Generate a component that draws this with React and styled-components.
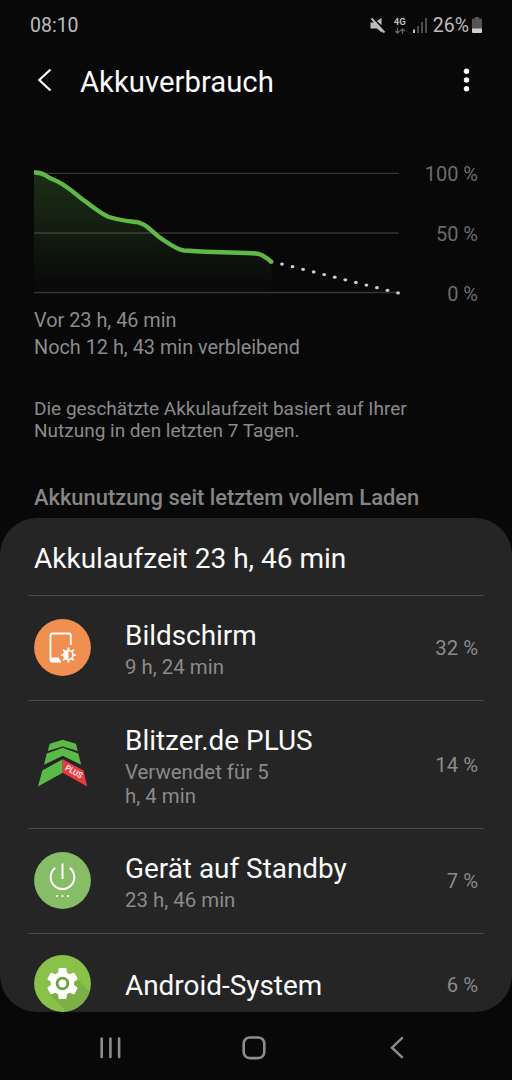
import styled, { createGlobalStyle } from 'styled-components';

const GlobalStyle = createGlobalStyle`
    body {
        margin: 0;
        background: #080808;
        font-family: Roboto, "Noto Sans", sans-serif;
        color: #fafafa;
    }
    svg {
        display: block;
        flex: none;
    }
`;

const Screen = styled.div`
    width: 512px;
    height: 1080px;
    overflow: hidden;
    display: flex;
    flex-direction: column;
`;

const StatusBar = styled.div`
    height: 50px;
    padding: 0 30px;
    box-sizing: border-box;
    display: flex;
    align-items: center;
    justify-content: space-between;
    font-size: 19.5px;
    line-height: 24px;
    color: #bdbdbd;
`;

const StatusIcons = styled.div`
    display: flex;
    align-items: center;
`;

const StatusText = styled.span`
    padding-top: 1px;
`;

const Percent = styled(StatusText)`
    margin: 0 3px 0 6px;
`;

const Network = styled.div`
    width: 14px;
    height: 19px;
    margin: 0 6px 0 7px;
    display: flex;
    flex-direction: column;
    align-items: center;
`;

const NetworkLabel = styled.span`
    font-size: 9.5px;
    line-height: 11px;
    font-weight: 700;
`;

const Header = styled.header`
    height: 60px;
    padding: 0 42px 0 37px;
    display: flex;
    align-items: center;
`;

const Title = styled.h1`
    flex: 1;
    margin: 4px 0 0 28px;
    font-size: 29.3px;
    line-height: 36px;
    font-weight: 400;
`;

const Chart = styled.section`
    height: 140px;
    margin-top: 54px;
    padding: 0 34px;
    display: flex;
    justify-content: space-between;
`;

const Scale = styled.div`
    display: flex;
    flex-direction: column;
    text-align: right;
    font-size: 20px;
    line-height: 20px;
    gap: 40px;
    color: #6b6b6b;
`;

const Times = styled.div`
    margin-top: 3px;
    padding: 0 34px;
    font-size: 19.85px;
    line-height: 27px;
    color: #8b8b8b;
`;

const Hint = styled.p`
    margin: 37px 34px 0;
    font-size: 19px;
    line-height: 22px;
    color: #8b8b8b;
`;

const SectionTitle = styled.h2`
    margin: 42px 34px 0;
    font-size: 21.9px;
    line-height: 28px;
    height: 34px;
    font-weight: 500;
    color: #858585;
`;

const Card = styled.main`
    height: 494px;
    border-radius: 37px;
    overflow: hidden;
    background: #252525;
`;

const CardTitle = styled.h3`
    margin: 0;
    padding: 1px 34px 0;
    height: 76px;
    font-size: 28px;
    line-height: 79px;
    font-weight: 400;
`;

const Row = styled.div`
    height: ${props => props.$height}px;
    box-sizing: border-box;
    margin: 0 28px;
    padding: 0 6px;
    border-top: 1px solid #4b4b4b;
    display: flex;
    align-items: center;
`;

const IconSlot = styled.div`
    margin-bottom: 2px;
`;

const Texts = styled.div`
    flex: 1;
    margin-left: 34px;
    padding-top: ${props => props.$single ? 3 : 1}px;
`;

const Name = styled.div`
    font-size: 27.9px;
    line-height: 36px;
`;

const Usage = styled.div`
    padding-top: 1px;
    font-size: 20.4px;
    line-height: 24px;
    white-space: pre-line;
    color: #8b8b8b;
`;

const Share = styled.div`
    padding-top: ${props => props.$single ? 1 : 0}px;
    font-size: 20.3px;
    line-height: 24px;
    color: #8b8b8b;
`;

const NavBar = styled.nav`
    flex: 1;
    padding: 4px 103px 0 98px;
    display: flex;
    align-items: center;
    justify-content: space-between;
`;

const MuteIcon = () => (
    <svg width="16" height="17" viewBox="0 0 16 17">
        <path d="M0.500 5.500h4.500l7 7v3.200L7 11.500H0.500zM11.500 0.800v7.500L7 4z" fill="#bdbdbd" />
        <path d="M1.500 1.500 14.500 15.500" stroke="#bdbdbd" strokeWidth="1.900" />
    </svg>
);

const DataArrows = () => (
    <svg width="12" height="8" viewBox="0 0 12 8">
        <path d="M3.500 1v5M1.300 4l2.200 2.200L5.700 4M8.500 7V2M6.300 4l2.200-2.200L10.700 4" fill="none" stroke="#666" strokeWidth="1.300" />
    </svg>
);

const SignalIcon = () => (
    <svg width="14" height="15" viewBox="0 0 14 15">
        <path d="M0 11.500h2V15H0z" fill="#c4c4c4" />
        <path d="M4 8h2v7H4zM8 4h2v11H8zM12 0h2v15h-2z" fill="#4c4c4c" />
    </svg>
);

const BatteryIcon = () => (
    <svg width="10" height="16" viewBox="0 0 10 16">
        <path d="M3 0h4v1.500h2a1 1 0 0 1 1 1V12H0V2.500a1 1 0 0 1 1-1h2z" fill="#555" />
        <path d="M0 11.500h10V15a1 1 0 0 1-1 1H1a1 1 0 0 1-1-1z" fill="#cfcfcf" />
    </svg>
);

const BackIcon = () => (
    <svg width="15" height="24" viewBox="0 0 15 24">
        <path d="M13.500 1.500 2.300 12l11.200 10.500" fill="none" stroke="#fafafa" strokeWidth="2.200" />
    </svg>
);

const MoreIcon = () => (
    <svg width="8" height="24" viewBox="0 0 8 24">
        {[3.3, 12, 20.7].map(y => <circle key={y} cx="4.500" cy={y} r="2.700" fill="#fafafa" />)}
    </svg>
);

const curve = 'M34 172.500C44 172 45 176 52 179C64 183 73 192 82 199C92 206 101 214 109 217C118 219.500 125 221 132 221.500C145 222 149 229 159 237C168 243 177 250 184 250.500C196 251 202 252 214 252C228 252 233 253 246 253C260 253 262 254 271.500 262';

// user units are page pixels, 100 % is at 173 and 0 % at 292
const BatteryGraph = () => (
    <svg width="368" height="140" viewBox="34 164 368 140">
        <defs>
            <linearGradient id="area" x1="0" y1="0" x2="0" y2="1">
                <stop offset="0" stopColor="#62bb46" stopOpacity="0.22" />
                <stop offset="1" stopColor="#62bb46" stopOpacity="0" />
            </linearGradient>
        </defs>
        <path d="M34 173.300h364.500M34 233h364.500M34 292.500h364.500" stroke="#353535" strokeWidth="1.300" />
        <path d={`${curve}V292H34z`} fill="url(#area)" />
        <path d={curve} fill="none" stroke="#62b846" strokeWidth="4.400" />
        <circle cx="271.300" cy="261.800" r="2.200" fill="#62b846" />
        {Array.from({ length: 12 }, (_, i) => (
            <ellipse key={i} cx={282 + i * 10.55} cy={264.1 + i * 2.62} rx="1.900" ry="1.600" fill="#c9ced6" />
        ))}
    </svg>
);

const DisplayIcon = () => (
    <svg width="57" height="57" viewBox="0 0 57 57">
        <circle cx="28.500" cy="28.500" r="28.400" fill="#f08f50" />
        <path d="M36.800 26V16.500a2 2 0 0 0-2-2H18.500a2 2 0 0 0-2 2V40.500a2 2 0 0 0 2 2H27" fill="none" stroke="#fff" strokeWidth="1.800" />
        <path d="M16 38.500h9l1.500 4.800H18a2 2 0 0 1-2-2z" fill="#fff" />
        <g transform="translate(34.400 36)" stroke="#fff" strokeWidth="1.700">
            <circle r="4.600" fill="none" />
            <path d="M0-4a4 4 0 0 0 0 8z" fill="#fff" stroke="none" />
            {[0, 45, 90, 135, 180, 225, 270, 315].map(a => (
                <path key={a} d="M0-5V-7.600" transform={`rotate(${a})`} />
            ))}
        </g>
    </svg>
);

const BlitzerIcon = () => (
    <svg width="57" height="57" viewBox="0 0 57 57">
        <path d="M15.700 8.800 28.700 4.700 42 8.800l1.800 7.200L28.700 11.500 13.700 16z" fill="#5bb947" />
        <path d="M12.700 18.500 28.700 12.800 44.300 18.500 47.200 29.800 28.700 20.800 10 29.800z" fill="#5bb947" />
        <path d="M8.300 35.500 28.700 24.200v13.500L4 51.500z" fill="#5bb947" />
        <path d="M28.700 24.200 49.500 35.500 53.200 51.500 28.700 37.700z" fill="#e63c41" />
        <text transform="translate(30.400 34.400) rotate(30)" fontSize="8.200" fontWeight="500" textLength="18.500" lengthAdjust="spacingAndGlyphs" fill="#fff">PLUS</text>
    </svg>
);

const StandbyIcon = () => (
    <svg width="57" height="57" viewBox="0 0 57 57">
        <circle cx="28.500" cy="28.500" r="28.400" fill="#86bd66" />
        <path d="M28.500 11.500V27M21.300 15.900a11.800 11.800 0 1 0 14.400 0" fill="none" stroke="#fff" strokeWidth="2" />
        {[23, 28.5, 34].map(x => <circle key={x} cx={x} cy="44" r="1.100" fill="#fff" />)}
    </svg>
);

const AndroidIcon = () => (
    <svg width="57" height="57" viewBox="0 0 57 57">
        <defs>
            <clipPath id="disc">
                <circle cx="28.500" cy="28.500" r="28.400" />
            </clipPath>
        </defs>
        <g clipPath="url(#disc)">
            <path d="M0 0h57v57H0z" fill="#8ac249" />
            <path d="M42 23 60 41v19H36L16 40z" fill="#7cb046" />
        </g>
        <circle cx="28.500" cy="28.500" r="8" fill="#6f9f3f" />
        <g transform="translate(9.060 9.060) scale(1.620)">
            <path fill="#fff" d="M19.140 12.940c.04-.3.06-.61.06-.94 0-.32-.02-.64-.07-.94l2.030-1.580c.18-.14.23-.41.12-.61l-1.920-3.320c-.12-.22-.37-.29-.59-.22l-2.390.96c-.5-.38-1.030-.7-1.620-.94l-.36-2.540c-.04-.24-.24-.41-.48-.41h-3.840c-.24 0-.43.17-.47.41l-.36 2.540c-.59.24-1.130.57-1.620.94l-2.390-.96c-.22-.08-.47 0-.59.22L2.740 8.870c-.12.21-.08.47.12.61l2.030 1.580c-.05.3-.09.63-.09.94s.02.64.07.94l-2.030 1.580c-.18.14-.23.41-.12.61l1.920 3.320c.12.22.37.29.59.22l2.390-.96c.5.38 1.030.7 1.620.94l.36 2.540c.05.24.24.41.48.41h3.840c.24 0 .44-.17.47-.41l.36-2.540c.59-.24 1.130-.56 1.620-.94l2.390.96c.22.08.47 0 .59-.22l1.920-3.320c.12-.22.07-.47-.12-.61zM12 16.200a4.200 4.200 0 1 1 0-8.400 4.200 4.200 0 0 1 0 8.400z" />
            <circle cx="12" cy="12" r="2.400" fill="#fff" />
        </g>
    </svg>
);

const RecentsIcon = () => (
    <svg width="24" height="24" viewBox="0 0 24 24">
        <path d="M3.700 2.500v18.400M12.400 2.500v18.400M21.100 2.500v18.400" stroke="#8c8c8c" strokeWidth="2.600" strokeLinecap="round" />
    </svg>
);

const HomeIcon = () => (
    <svg width="24" height="24" viewBox="0 0 24 24">
        <rect x="1.700" y="1.500" width="20.600" height="20.600" rx="6" fill="none" stroke="#8c8c8c" strokeWidth="2.600" />
    </svg>
);

const NavBackIcon = () => (
    <svg width="24" height="24" viewBox="0 0 24 24">
        <path d="M17 2.200 7 11.700l10 9.500" fill="none" stroke="#8c8c8c" strokeWidth="2.500" strokeLinecap="round" />
    </svg>
);

const apps = [
    { name: 'Bildschirm', usage: '9 h, 24 min', share: '32 %', height: 105, Icon: DisplayIcon },
    { name: 'Blitzer.de PLUS', usage: 'Verwendet für 5\nh, 4 min', share: '14 %', height: 128, Icon: BlitzerIcon },
    { name: 'Gerät auf Standby', usage: '23 h, 46 min', share: '7 %', height: 105, Icon: StandbyIcon },
    { name: 'Android-System', share: '6 %', height: 102, Icon: AndroidIcon },
];

const App = () => {
    return (
        <>
            <GlobalStyle />
            <Screen>
                <StatusBar>
                    <StatusText>08:10</StatusText>
                    <StatusIcons>
                        <MuteIcon />
                        <Network>
                            <NetworkLabel>4G</NetworkLabel>
                            <DataArrows />
                        </Network>
                        <SignalIcon />
                        <Percent>26%</Percent>
                        <BatteryIcon />
                    </StatusIcons>
                </StatusBar>
                <Header>
                    <BackIcon />
                    <Title>Akkuverbrauch</Title>
                    <MoreIcon />
                </Header>
                <Chart>
                    <BatteryGraph />
                    <Scale>
                        <span>100 %</span>
                        <span>50 %</span>
                        <span>0 %</span>
                    </Scale>
                </Chart>
                <Times>
                    <div>Vor 23 h, 46 min</div>
                    <div>Noch 12 h, 43 min verbleibend</div>
                </Times>
                <Hint>
                    Die geschätzte Akkulaufzeit basiert auf Ihrer<br />
                    Nutzung in den letzten 7 Tagen.
                </Hint>
                <SectionTitle>Akkunutzung seit letztem vollem Laden</SectionTitle>
                <Card>
                    <CardTitle>Akkulaufzeit 23 h, 46 min</CardTitle>
                    {apps.map(({ name, usage, share, height, Icon }) => (
                        <Row key={name} $height={height}>
                            <IconSlot>
                                <Icon />
                            </IconSlot>
                            <Texts $single={!usage}>
                                <Name>{name}</Name>
                                {usage && <Usage>{usage}</Usage>}
                            </Texts>
                            <Share $single={!usage}>{share}</Share>
                        </Row>
                    ))}
                </Card>
                <NavBar>
                    <RecentsIcon />
                    <HomeIcon />
                    <NavBackIcon />
                </NavBar>
            </Screen>
        </>
    );
};

export default App;
